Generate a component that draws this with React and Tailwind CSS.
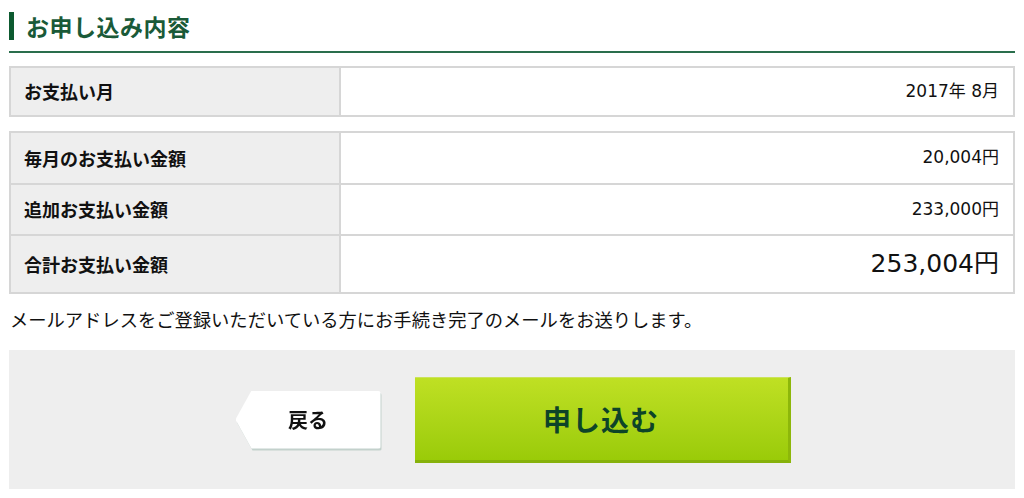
export default function App() {
  const rows = [
    { label: "毎月のお支払い金額", value: "20,004円", h: "h-[50px]", big: false },
    { label: "追加お支払い金額", value: "233,000円", h: "h-[51px]", big: false },
    { label: "合計お支払い金額", value: "253,004円", h: "h-[58px]", big: true },
  ];

  return (
    <div className="w-[1024px] h-[498px] bg-white px-[9px] pt-[12px] text-[#111] font-['Noto_Sans_CJK_JP',sans-serif] overflow-hidden">
      {/* Heading */}
      <div className="flex items-center h-[28px]">
        <div className="w-[5px] h-[28px] bg-[#0d5a30]" />
        <h2 className="ml-[12px] text-[23px] leading-none font-bold text-[#1a5a38] tracking-[0.5px]">
          お申し込み内容
        </h2>
      </div>
      <div className="mt-[11px] h-[2px] bg-[#2a6e4c]" />

      {/* Month table */}
      <div className="mt-[13px] border-2 border-[#d6d6d6] flex h-[51px]">
        <div className="w-[330px] bg-[#eeeeee] border-r-2 border-[#d6d6d6] flex items-center pl-[13px] text-[18px] font-bold">
          お支払い月
        </div>
        <div className="flex-1 flex items-center justify-end pr-[14px] text-[17px] font-['DejaVu_Sans','Noto_Sans_CJK_JP',sans-serif]">
          2017年 8月
        </div>
      </div>

      {/* Amount table */}
      <div className="mt-[14px] border-2 border-[#d6d6d6]">
        {rows.map((r, i) => (
          <div
            key={r.label}
            className={`flex ${r.h} ${i > 0 ? "border-t-2 border-[#d6d6d6]" : ""}`}
          >
            <div className="w-[330px] bg-[#eeeeee] border-r-2 border-[#d6d6d6] flex items-center pl-[13px] text-[18px] font-bold">
              {r.label}
            </div>
            <div
              className={`flex-1 flex items-center justify-end pr-[14px] font-['DejaVu_Sans','Noto_Sans_CJK_JP',sans-serif] ${
                r.big ? "text-[25px]" : "text-[17px]"
              }`}
            >
              {r.value}
            </div>
          </div>
        ))}
      </div>

      <p className="mt-[13px] pl-[1px] text-[18.3px] leading-[24px] whitespace-nowrap">
        メールアドレスをご登録いただいている方にお手続き完了のメールをお送りします。
      </p>

      {/* Action panel */}
      <div className="mt-[19px] h-[139px] bg-[#eeeeee] flex items-center justify-center gap-[34px] pl-[2px]">
        <div className="drop-shadow-[1px_2px_0px_#c3d1cc]">
          <button className="w-[145px] h-[58px] bg-white [clip-path:polygon(16px_0,100%_0,100%_100%,16px_100%,0_50%)] rounded-r-[3px] flex items-center justify-center text-[20px] font-bold text-[#111]">
            戻る
          </button>
        </div>
        <button className="w-[376px] h-[86px] bg-gradient-to-b from-[#bfe023] to-[#9acb08] border-t border-[#cbe35a] border-r-[3px] border-b-[3px] border-r-[#8db70a] border-b-[#86b10a] flex items-center justify-center text-[28px] font-bold text-[#0d4428] tracking-[1px]">
          申し込む
        </button>
      </div>
    </div>
  );
}
